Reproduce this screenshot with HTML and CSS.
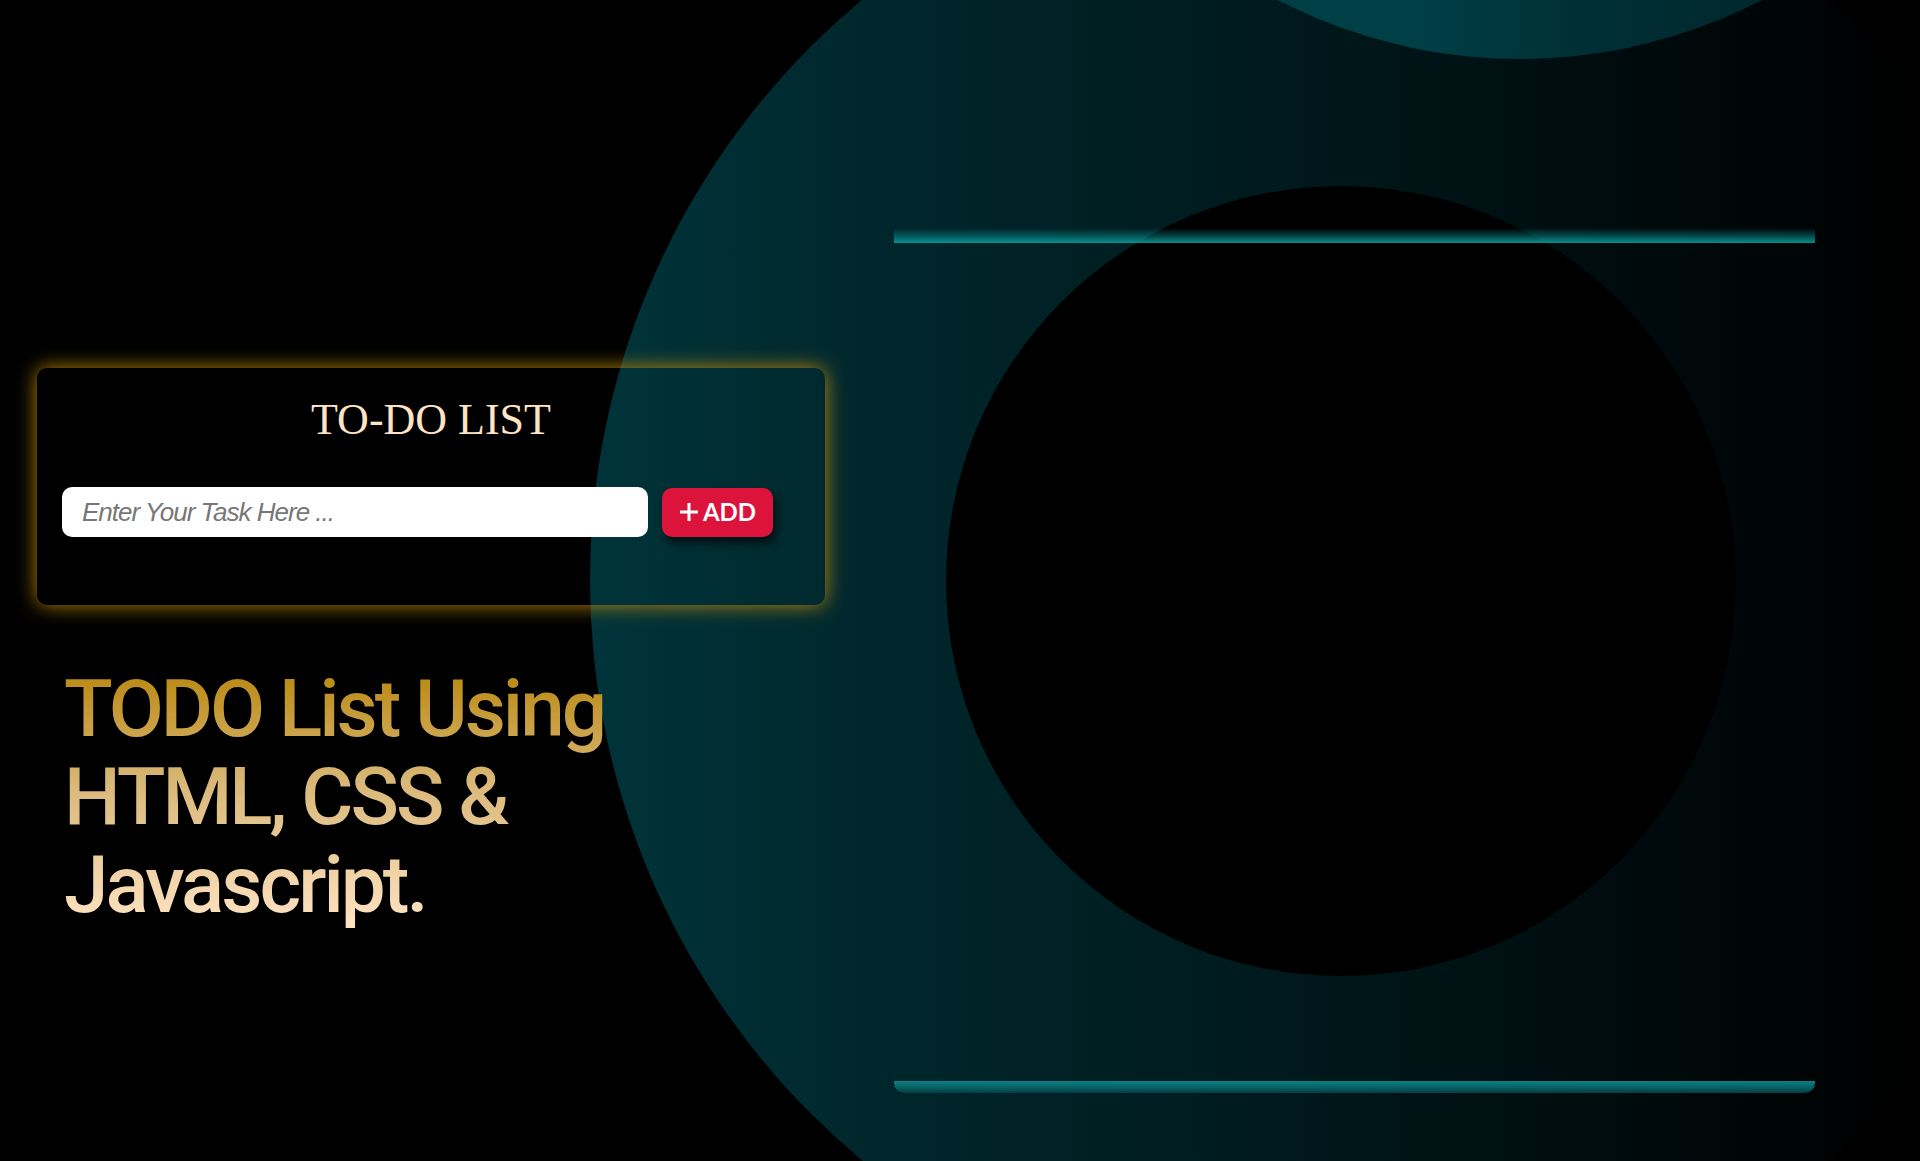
FILE: index.html
```html
<!DOCTYPE html>
<html lang="en">
<head>
<meta charset="utf-8">
<title>TODO List</title>
<link rel="stylesheet" href="styles.css">
</head>
<body>
<div class="page">
  <div class="backdrop" aria-hidden="true">
    <div class="orb orb-outer"></div>
    <div class="orb orb-top"></div>
    <div class="orb orb-inner"></div>
    <div class="panel">
      <span class="panel-top"></span>
      <span class="panel-bottom"></span>
    </div>
  </div>
  <main class="content">
    <section class="card">
      <h2 class="card-title">TO-DO LIST</h2>
      <div class="row">
        <input class="task-input" type="text" placeholder="Enter Your Task Here ...">
        <button class="add-btn" type="button">
          <svg class="plus" width="20" height="20" viewBox="0 0 20 20"><path d="M10 1v18M1 10h18" stroke="#fff" stroke-width="3" fill="none"/></svg>
          <span>ADD</span>
        </button>
      </div>
    </section>
    <h1 class="headline">TODO List Using HTML, CSS &amp; Javascript.</h1>
  </main>
</div>
</body>
</html>
```
FILE: styles.css
```css
html, body {
  margin: 0;
  padding: 0;
  background: #000;
}
.page {
  position: relative;
  height: 1161px;
  overflow: hidden;
  background: #000;
}
.backdrop {
  position: absolute;
  inset: 0;
  z-index: 0;
}
.orb {
  position: absolute;
  border-radius: 50%;
}
.orb-outer {
  left: 590px;
  top: -175px;
  width: 1510px;
  height: 1510px;
  background: linear-gradient(to right, #00343a 0%, #00262b 20%, #001a1d 45%, #000a0c 70%, #000 88%);
}
.orb-top {
  left: 994px;
  top: -993px;
  width: 1052px;
  height: 1052px;
  background: linear-gradient(to right, #003f46 40%, #003037 55%, #00292e 70%);
}
.orb-inner {
  left: 946px;
  top: 186px;
  width: 790px;
  height: 790px;
  background: #000;
}
.panel {
  position: absolute;
  left: 894px;
  top: 228px;
  width: 921px;
  height: 865px;
}
.panel-top {
  position: absolute;
  left: 0;
  right: 0;
  top: 0;
  height: 15px;
  background: linear-gradient(to bottom, rgba(8, 140, 140, 0) 0%, rgba(8, 140, 140, 0.5) 55%, rgba(12, 155, 155, 0.9) 100%);
}
.panel-bottom {
  position: absolute;
  left: 0;
  right: 0;
  bottom: 0;
  height: 12px;
  border-radius: 0 0 10px 10px;
  background: linear-gradient(to bottom, #0d8084 0%, #086468 50%, #043e42 100%);
}
.content {
  position: relative;
  z-index: 1;
  width: 788px;
  padding: 368px 0 0 37px;
}
.card {
  width: 788px;
  height: 237px;
  box-sizing: border-box;
  padding: 30px 25px 0;
  border-radius: 10px;
  box-shadow: 0 0 20px #b8860b;
}
.card-title {
  margin: 0;
  font-family: "Liberation Serif", "Times New Roman", serif;
  font-weight: 400;
  font-size: 44px;
  line-height: 1;
  text-align: center;
  color: #ffe4c4;
}
.row {
  display: flex;
  align-items: center;
  gap: 14px;
  margin-top: 45px;
}
.task-input {
  width: 586px;
  height: 50px;
  box-sizing: border-box;
  border: none;
  outline: none;
  border-radius: 10px;
  padding: 0 20px;
  background: #fff;
  font-family: "Liberation Sans", Arial, sans-serif;
  font-style: italic;
  font-size: 26px;
  letter-spacing: -1px;
  color: #333;
}
.task-input::placeholder {
  color: #777;
}
.add-btn {
  width: 111px;
  height: 49px;
  display: flex;
  align-items: center;
  justify-content: center;
  gap: 4px;
  border: none;
  border-radius: 10px;
  padding: 0;
  background: #dc143c;
  color: #fff;
  font-family: Lato, "Open Sans", sans-serif;
  font-weight: 700;
  font-size: 24px;
  line-height: 1;
  box-shadow: 3px 6px 10px rgba(0, 0, 0, 0.65);
  cursor: pointer;
}
.plus {
  display: block;
  flex: none;
}
.headline {
  margin: 60px 0 0 27px;
  width: 620px;
  font-family: Roboto, "Noto Sans", sans-serif;
  font-weight: 500;
  font-size: 80px;
  line-height: 88px;
  letter-spacing: -3px;
  background: linear-gradient(to bottom, #b8860b 0%, #d9b878 45%, #ffe4c4 100%);
  -webkit-background-clip: text;
  background-clip: text;
  -webkit-text-fill-color: transparent;
  color: transparent;
}
```
